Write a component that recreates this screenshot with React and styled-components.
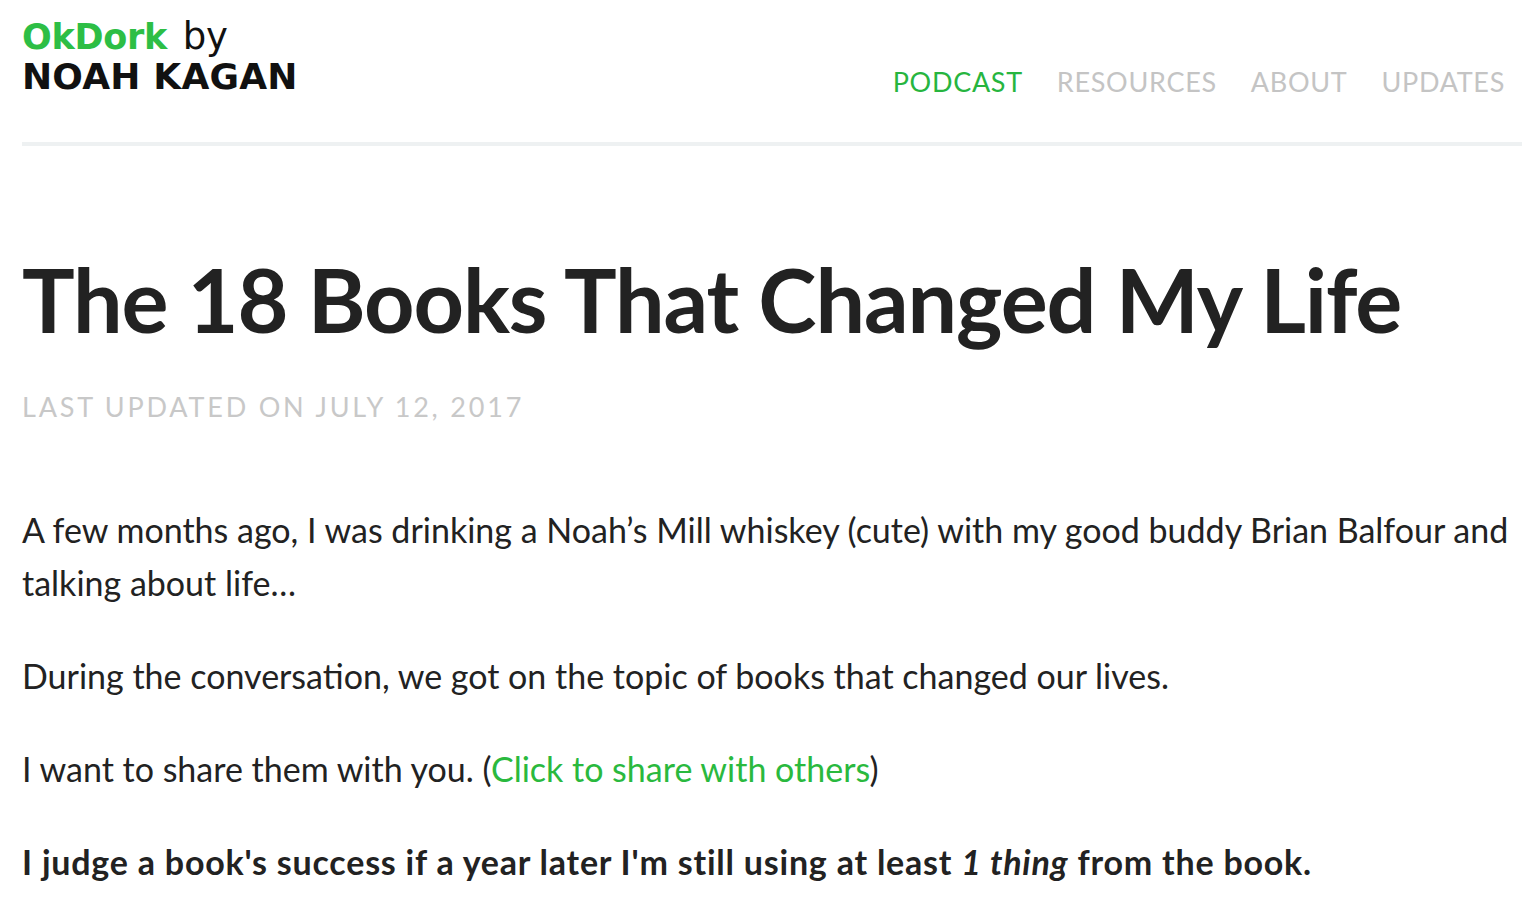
import React from 'react';
import styled, { createGlobalStyle } from 'styled-components';

const GlobalStyle = createGlobalStyle`
    html, body {
        margin: 0;
        padding: 0;
        background: #fff;
    }
    body {
        font-family: Lato, "Open Sans", sans-serif;
        color: #222;
    }
`

const Page = styled.div`
    width: 1500px;
    padding: 0 16px 0 22px;
`

const Header = styled.header`
    display: flex;
    justify-content: space-between;
    align-items: flex-start;
    height: 142px;
    border-bottom: 4px solid #eef1f2;
`

const Logo = styled.a`
    display: flex;
    flex-direction: column;
    margin-top: 17px;
    font-family: "DejaVu Sans", sans-serif;
    color: #111;
    text-decoration: none;
    line-height: 39px;
`

const LogoTop = styled.span`
    font-size: 35px;
    font-weight: 700;
    color: #2dbe45;
    letter-spacing: -0.3px;

    span {
        margin-left: 4px;
        color: #111;
        font-weight: 400;
        font-size: 37px;
    }
`

const LogoBottom = styled.span`
    font-size: 36px;
    font-weight: 700;
    letter-spacing: 0.2px;
`

const Nav = styled.nav`
    display: flex;
    gap: 34px;
    margin-top: 65px;
    padding-right: 17px;
`

const NavItem = styled.a`
    font-family: Lato, sans-serif;
    font-size: 27px;
    letter-spacing: 0.7px;
    text-transform: uppercase;
    text-decoration: none;
    color: ${({ $active }) => ($active ? '#27b53f' : '#c4c4c4')};
`

const Title = styled.h1`
    margin: 109px 0 0;
    font-family: Lato, sans-serif;
    font-weight: 700;
    font-size: 88px;
    line-height: 1;
    color: #222;
    letter-spacing: -1.1px;
`

const Meta = styled.div`
    margin-top: 47px;
    font-family: Lato, sans-serif;
    font-weight: 400;
    font-size: 27px;
    letter-spacing: 2.8px;
    color: #c8c8c8;
    text-transform: uppercase;
`

const Body = styled.div`
    margin-top: 80px;
    font-family: Lato, sans-serif;
    font-size: 34px;
    line-height: 53px;
    color: #222;

    p {
        margin: 0 0 40px;
    }

    strong {
        letter-spacing: 0.78px;
    }
`

const Link = styled.a`
    color: #2ab93e;
    text-decoration: none;
`

const navItems = ['Podcast', 'Resources', 'About', 'Updates'];

const App = () => {
    return <Page>
        <GlobalStyle />
        <Header>
            <Logo href="#">
                <LogoTop>OkDork <span>by</span></LogoTop>
                <LogoBottom>NOAH KAGAN</LogoBottom>
            </Logo>
            <Nav>
                {navItems.map((item, index) => (
                    <NavItem key={item} href="#" $active={index === 0}>{item}</NavItem>
                ))}
            </Nav>
        </Header>
        <Title>The 18 Books That Changed My Life</Title>
        <Meta>Last updated on July 12, 2017</Meta>
        <Body>
            <p>A few months ago, I was drinking a Noah’s Mill whiskey (cute) with my good buddy Brian Balfour and talking about life…</p>
            <p>During the conversation, we got on the topic of books that changed our lives.</p>
            <p>I want to share them with you. (<Link href="#">Click to share with others</Link>)</p>
            <p><strong>I judge a book's success if a year later I'm still using at least <em>1 thing</em> from the book.</strong></p>
        </Body>
    </Page>
}

export default App;
